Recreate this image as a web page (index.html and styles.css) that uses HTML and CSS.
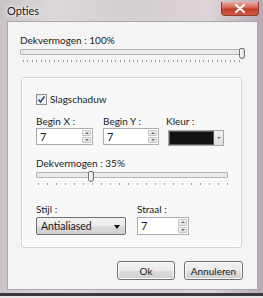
FILE: index.html
```html
<!DOCTYPE html>
<html lang="nl">
<head>
  <meta charset="UTF-8" />
  <title>Opties</title>
  <link rel="stylesheet" href="styles.css">
</head>
<body>
  <div class="window">
    <div class="titlebar">
      <span class="title">Opties</span>
      <div class="close">
        <svg width="12" height="9" viewBox="0 0 12 9"><path d="M2 1 L10 8 M10 1 L2 8" stroke="#fff" stroke-width="2.2" stroke-linecap="round"/></svg>
      </div>
    </div>

    <div class="client">
      <div class="label">Dekvermogen : 100%</div>
      <div class="slider slider-top">
        <div class="track"></div>
        <div class="thumb" style="left: 219px"></div>
        <div class="ticks ticks-fine"></div>
      </div>

      <div class="group">
        <label class="check">
          <span class="box">
            <svg width="9" height="9" viewBox="0 0 9 9"><path d="M1.5 4.5 L3.5 7 L7.5 1.5" fill="none" stroke="#2b4f86" stroke-width="1.6"/></svg>
          </span>
          Slagschaduw
        </label>

        <div class="row">
          <div class="col col-x">
            <div class="label">Begin X :</div>
            <div class="spin">
              <span class="value">7</span>
              <div class="arrows"><span class="up"></span><span class="down"></span></div>
            </div>
          </div>
          <div class="col col-y">
            <div class="label">Begin Y :</div>
            <div class="spin spin-y">
              <span class="value">7</span>
              <div class="arrows"><span class="up"></span><span class="down"></span></div>
            </div>
          </div>
          <div class="col">
            <div class="label">Kleur :</div>
            <div class="color-pick">
              <span class="swatch"></span>
              <span class="drop"></span>
            </div>
          </div>
        </div>

        <div class="label label-opacity">Dekvermogen : 35%</div>
        <div class="slider slider-inner">
          <div class="track"></div>
          <div class="thumb" style="left: 52px"></div>
          <div class="ticks ticks-coarse"></div>
        </div>

        <div class="row row-bottom">
          <div class="col col-style">
            <div class="label">Stijl :</div>
            <div class="select">Antialiased<span class="caret"></span></div>
          </div>
          <div class="col">
            <div class="label">Straal :</div>
            <div class="spin spin-radius">
              <span class="value">7</span>
              <div class="arrows"><span class="up"></span><span class="down"></span></div>
            </div>
          </div>
        </div>
      </div>

      <div class="buttons">
        <button class="btn btn-ok">Ok</button>
        <button class="btn">Annuleren</button>
      </div>
    </div>
  </div>
</body>
</html>
```

FILE: styles.css
```css
* {
  box-sizing: border-box;
  margin: 0;
  padding: 0;
}

body {
  width: 263px;
  height: 298px;
  overflow: hidden;
  background: #e9e3e6;
  font-family: 'Lato', 'Open Sans', sans-serif;
  font-size: 10px;
  color: #1a1a1a;
}

.window {
  width: 266px;
  height: 296px;
  margin-left: -3px;
  padding: 0 5px 3px 7px;
  border-left: 3px solid #3c3a42;
  border-bottom: 3px solid #3a383e;
  background: linear-gradient(90deg, #c9c2c7 0%, #ddd7da 20%, #d4cdd2 50%, #dcd4d8 80%, #b9a7b2 100%);
}

.titlebar {
  height: 21px;
  display: flex;
  align-items: flex-start;
  justify-content: space-between;
}

.title {
  margin: 4px 0 0 0;
  font-size: 11px;
  color: #202020;
  text-shadow: 0 0 6px #fff, 0 0 3px #fff;
}

.close {
  width: 38px;
  height: 14px;
  margin-top: 2px;
  margin-right: -1px;
  border: 1px solid #8c3a33;
  border-top: none;
  border-radius: 0 0 4px 4px;
  background: linear-gradient(#e9a99b, #d3614f 45%, #c23c2a 55%, #d35a45);
  display: flex;
  align-items: center;
  justify-content: center;
}

.client {
  height: 269px;
  background: #f5f4f5;
  border: 1px solid #a9a5a8;
  padding: 11px 16px 0 12px;
}

.label {
  line-height: 14px;
  height: 14px;
}

.slider {
  position: relative;
  height: 19px;
}

.track {
  height: 6px;
  margin-top: 2px;
  background: #e7eaea;
  border: 1px solid #b5b5b5;
  border-radius: 1px;
}

.thumb {
  position: absolute;
  top: -1px;
  width: 6px;
  height: 11px;
  background: linear-gradient(90deg, #fafafa, #dcdcdc);
  border: 1px solid #707070;
  border-radius: 2px 2px 3px 3px;
}

.ticks {
  height: 2px;
  margin-top: 5px;
}

.ticks-fine {
  margin-left: 3px;
  width: 220px;
  background: repeating-linear-gradient(90deg, #9a9a9a 0 1px, transparent 1px 4.4px);
}

.ticks-coarse {
  margin-left: 2px;
  width: 190px;
  background: repeating-linear-gradient(90deg, #9a9a9a 0 1px, transparent 1px 9px);
}

.slider-top {
  width: 222px;
  margin-top: 1px;
}

.group {
  margin-top: 9px;
  margin-left: 1px;
  width: 221px;
  height: 171px;
  border: 1px solid #cdd5da;
  border-radius: 3px;
  background: #f8f8f8;
  box-shadow: inset 0 0 0 1px #fff;
  padding: 15px 0 0 14px;
}

.check {
  display: flex;
  align-items: center;
  gap: 3px;
  line-height: 13px;
}

.box {
  width: 11px;
  height: 11px;
  border: 1px solid #8e8f8f;
  background: linear-gradient(135deg, #e6e6e6, #fff);
  display: flex;
  align-items: center;
  justify-content: center;
}

.row {
  display: flex;
  margin-top: 8px;
}

.col-x {
  width: 67px;
}

.col-y {
  width: 63px;
}

.col-style {
  width: 101px;
}

.spin {
  width: 57px;
  height: 17px;
  background: #fff;
  border: 1px solid #abadb3;
  display: flex;
  justify-content: space-between;
  align-items: stretch;
}

.spin-y {
  width: 56px;
}

.spin-radius {
  width: 52px;
  height: 18px;
  margin-top: 1px;
}

.value {
  padding-left: 3px;
  line-height: 15px;
  font-size: 11px;
}

.arrows {
  width: 10px;
  display: flex;
  flex-direction: column;
  gap: 1px;
  padding: 1px 1px 1px 0;
}

.arrows span {
  flex: 1;
  background: linear-gradient(#f4f4f4, #e2e2e2);
  border: 1px solid #c4c4c4;
  border-radius: 1px;
  position: relative;
}

.arrows span::after {
  content: '';
  position: absolute;
  left: 2px;
  top: 1px;
  border-left: 2px solid transparent;
  border-right: 2px solid transparent;
}

.arrows .up::after {
  border-bottom: 2px solid #6a6a6a;
}

.arrows .down::after {
  border-top: 2px solid #6a6a6a;
}

.color-pick {
  width: 56px;
  height: 16px;
  margin-top: 2px;
  margin-left: 2px;
  display: flex;
  border: 1px solid #a8a8a8;
  background: #e6e6e6;
}

.swatch {
  width: 45px;
  background: #111;
  border: 1px solid #555;
}

.drop {
  flex: 1;
  position: relative;
  background: linear-gradient(#f2f2f2, #dcdcdc);
}

.drop::after {
  content: '';
  position: absolute;
  left: 3px;
  top: 6px;
  border-left: 2px solid transparent;
  border-right: 2px solid transparent;
  border-top: 2px solid #777;
}

.label-opacity {
  margin-top: 10px;
}

.slider-inner {
  width: 192px;
  margin-top: 1px;
}

.row-bottom {
  margin-top: 11px;
}

.select {
  width: 90px;
  height: 18px;
  margin-top: 1px;
  border: 1px solid #707070;
  border-radius: 2px;
  background: linear-gradient(#f2f2f2 0%, #ebebeb 50%, #dddddd 50%, #cfcfcf 100%);
  padding-left: 4px;
  line-height: 16px;
  font-size: 10.5px;
  position: relative;
}

.caret {
  position: absolute;
  right: 5px;
  top: 7px;
  border-left: 3px solid transparent;
  border-right: 3px solid transparent;
  border-top: 4px solid #111;
}

.buttons {
  display: flex;
  justify-content: flex-end;
  gap: 9px;
  margin-top: 13px;
  margin-right: -2px;
}

.btn {
  width: 59px;
  height: 19px;
  font-family: inherit;
  font-size: 10px;
  color: #1e1e1e;
  border: 1px solid #707070;
  border-radius: 3px;
  background: linear-gradient(#f2f2f2 0%, #ebebeb 50%, #dddddd 50%, #cfcfcf 100%);
  box-shadow: inset 0 0 0 1px #fcfcfc;
}

.btn-ok {
  width: 58px;
}
```
